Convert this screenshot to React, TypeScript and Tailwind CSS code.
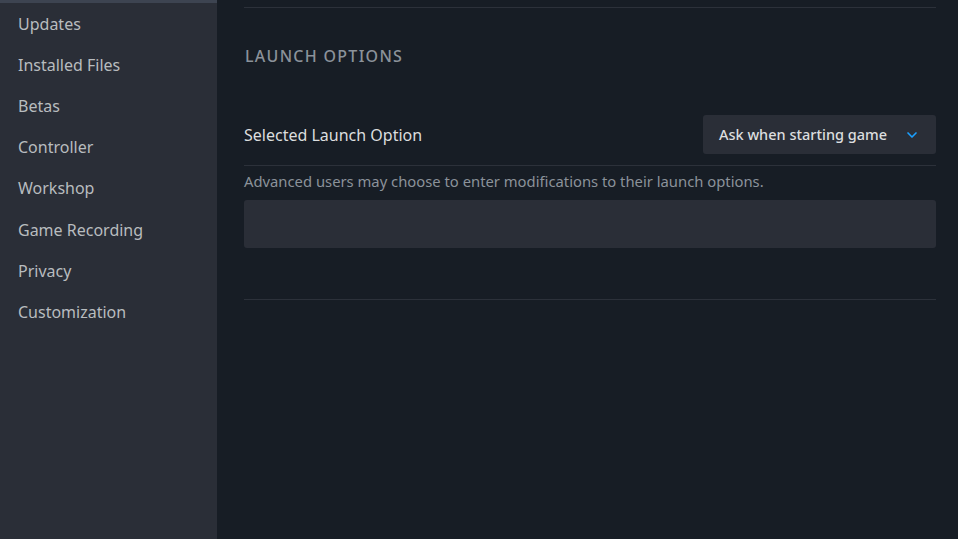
import { ChevronDown } from 'lucide-react'

const navItems = [
  'Updates',
  'Installed Files',
  'Betas',
  'Controller',
  'Workshop',
  'Game Recording',
  'Privacy',
  'Customization',
]

function Sidebar() {
  return (
    <aside className="flex w-[217px] shrink-0 flex-col bg-[#2a2e37]">
      {/* bottom edge of the highlighted entry scrolled above */}
      <div className="h-[3px] bg-[#3d4451]" />
      <nav className="flex flex-col">
        {navItems.map((item) => (
          <div key={item} className="flex h-[41.2px] items-center px-[18px] text-[16px] text-[#b8bcbf]">
            {item}
          </div>
        ))}
      </nav>
    </aside>
  )
}

function LaunchOptions() {
  return (
    <section className="flex flex-col">
      <div className="h-[8px] border-b border-[#2c313a]" />
      <h2 className="mt-[36px] pl-[1px] text-[16px] font-medium uppercase tracking-[0.08em] text-[#8b929a]">
        Launch Options
      </h2>
      <div className="mt-[47px] flex items-center justify-between border-b border-[#2c313a] pb-[11px]">
        <span className="text-[16px] text-[#dcdedf]">Selected Launch Option</span>
        <button className="flex h-[39px] w-[233px] items-center justify-between rounded-[3px] bg-[#2a2e37] pl-[16px] pr-[16px] text-[14.5px] font-medium text-[#dcdedf]">
          Ask when starting game
          <ChevronDown className="h-[16px] w-[16px] text-[#1a9fff]" strokeWidth={2.5} />
        </button>
      </div>
      <p className="mt-[4px] text-[14.8px] text-[#8b929a]">
        Advanced users may choose to enter modifications to their launch options.
      </p>
      <input
        type="text"
        className="mt-[8px] h-[48px] rounded-[3px] bg-[#2a2e37] px-3 text-[14px] text-[#dcdedf] outline-none"
      />
      <div className="mt-[51px] border-b border-[#2c313a]" />
    </section>
  )
}

export default function App() {
  return (
    <div className="flex h-[539px] w-[958px] overflow-hidden bg-[#171d25] font-['Noto_Sans',sans-serif]">
      <Sidebar />
      <main className="flex-1 pl-[27px] pr-[22px]">
        <LaunchOptions />
      </main>
    </div>
  )
}
